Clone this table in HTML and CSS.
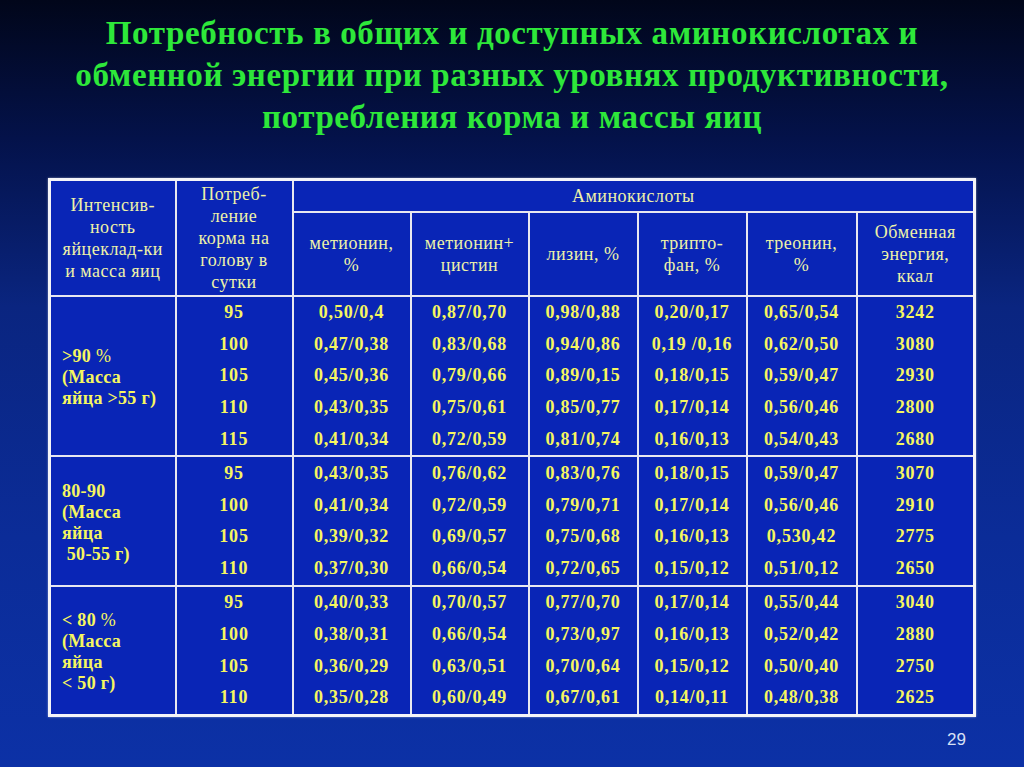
FILE: index.html
```html
<!DOCTYPE html>
<html lang="ru">
<head>
<meta charset="utf-8">
<title>Потребность в аминокислотах</title>
<link rel="stylesheet" href="styles.css">
</head>
<body>
<div class="slide">
  <h1 class="title">Потребность в общих и доступных аминокислотах и<br>обменной энергии при разных уровнях продуктивности,<br>потребления корма и массы яиц</h1>
  <div class="table-wrap">
    <table class="data">
      <colgroup>
        <col class="c1"><col class="c2"><col class="c3"><col class="c4"><col class="c5"><col class="c6"><col class="c7"><col class="c8">
      </colgroup>
      <thead>
        <tr class="h1row">
          <th rowspan="2">Интенсив-<br>ность<br>яйцеклад-ки<br>и масса яиц</th>
          <th rowspan="2">Потреб-<br>ление<br>корма на<br>голову в<br>сутки</th>
          <th colspan="6">Аминокислоты</th>
        </tr>
        <tr class="h2row">
          <th>метионин,<br>%</th>
          <th>метионин+<br>цистин</th>
          <th>лизин, %</th>
          <th>трипто-<br>фан, %</th>
          <th>треонин,<br>%</th>
          <th>Обменная<br>энергия,<br>ккал</th>
        </tr>
      </thead>
      <tbody>
        <tr><td class="label" rowspan="5">&gt;90 <span class="n">%</span><br>(Масса<br>яйца &gt;55 г)</td><td>95</td><td>0,50/0,4</td><td>0,87/0,70</td><td>0,98/0,88</td><td>0,20/0,17</td><td>0,65/0,54</td><td>3242</td></tr>
        <tr><td>100</td><td>0,47/0,38</td><td>0,83/0,68</td><td>0,94/0,86</td><td>0,19 /0,16</td><td>0,62/0,50</td><td>3080</td></tr>
        <tr><td>105</td><td>0,45/0,36</td><td>0,79/0,66</td><td>0,89/0,15</td><td>0,18/0,15</td><td>0,59/0,47</td><td>2930</td></tr>
        <tr><td>110</td><td>0,43/0,35</td><td>0,75/0,61</td><td>0,85/0,77</td><td>0,17/0,14</td><td>0,56/0,46</td><td>2800</td></tr>
        <tr><td>115</td><td>0,41/0,34</td><td>0,72/0,59</td><td>0,81/0,74</td><td>0,16/0,13</td><td>0,54/0,43</td><td>2680</td></tr>
      </tbody>
      <tbody>
        <tr><td class="label" rowspan="4">80-90<br>(Масса<br>яйца<br>&nbsp;50-55 г)</td><td>95</td><td>0,43/0,35</td><td>0,76/0,62</td><td>0,83/0,76</td><td>0,18/0,15</td><td>0,59/0,47</td><td>3070</td></tr>
        <tr><td>100</td><td>0,41/0,34</td><td>0,72/0,59</td><td>0,79/0,71</td><td>0,17/0,14</td><td>0,56/0,46</td><td>2910</td></tr>
        <tr><td>105</td><td>0,39/0,32</td><td>0,69/0,57</td><td>0,75/0,68</td><td>0,16/0,13</td><td>0,530,42</td><td>2775</td></tr>
        <tr><td>110</td><td>0,37/0,30</td><td>0,66/0,54</td><td>0,72/0,65</td><td>0,15/0,12</td><td>0,51/0,12</td><td>2650</td></tr>
      </tbody>
      <tbody>
        <tr><td class="label" rowspan="4">&lt; 80 <span class="n">%</span><br>(Масса<br>яйца<br>&lt; 50 г)</td><td>95</td><td>0,40/0,33</td><td>0,70/0,57</td><td>0,77/0,70</td><td>0,17/0,14</td><td>0,55/0,44</td><td>3040</td></tr>
        <tr><td>100</td><td>0,38/0,31</td><td>0,66/0,54</td><td>0,73/0,97</td><td>0,16/0,13</td><td>0,52/0,42</td><td>2880</td></tr>
        <tr><td>105</td><td>0,36/0,29</td><td>0,63/0,51</td><td>0,70/0,64</td><td>0,15/0,12</td><td>0,50/0,40</td><td>2750</td></tr>
        <tr><td>110</td><td>0,35/0,28</td><td>0,60/0,49</td><td>0,67/0,61</td><td>0,14/0,11</td><td>0,48/0,38</td><td>2625</td></tr>
      </tbody>
    </table>
  </div>
  <div class="page-num">29</div>
</div>
</body>
</html>
```

FILE: styles.css
```css
html, body {
  margin: 0;
  padding: 0;
}

body {
  width: 1024px;
  height: 767px;
  overflow: hidden;
  background: linear-gradient(180deg, #01061a 0%, #04124a 18%, #0a2580 40%, #0b2c98 70%, #0c31a6 100%);
  font-family: "Liberation Serif", "Times New Roman", serif;
}

.slide {
  display: flex;
  flex-direction: column;
  height: 767px;
}

.title {
  margin: 0;
  padding-top: 12px;
  text-align: center;
  color: #2ee83a;
  font-family: "Liberation Serif", serif;
  font-weight: bold;
  font-size: 33px;
  letter-spacing: 0.6px;
  line-height: 42px;
  height: 126px;
}

.table-wrap {
  margin-top: 40px;
  padding-left: 48px;
}

.data {
  border-collapse: collapse;
  table-layout: fixed;
  width: 925px;
  background: #0925b6;
  border: 3px solid #f4f4f8;
  box-shadow: 0 0 2px rgba(255,255,255,0.5);
}

.c1 { width: 126px; }
.c2 { width: 117px; }
.c3 { width: 118px; }
.c4 { width: 118px; }
.c5 { width: 109px; }
.c6 { width: 109px; }
.c7 { width: 110px; }
.c8 { width: 118px; }

.data th {
  border: 2px solid #e8e8f0;
  color: #eef2a8;
  font-weight: normal;
  font-size: 18px;
  letter-spacing: 0.5px;
  line-height: 22px;
  padding: 0 1px;
  text-align: center;
  vertical-align: middle;
}

.h1row { height: 32px; }
.h2row { height: 84px; }

.data tbody {
  border-top: 2px solid #e8e8f0;
}

.data td {
  border-left: 2px solid #e8e8f0;
  border-right: 2px solid #e8e8f0;
  color: #f6f660;
  font-weight: bold;
  font-size: 18px;
  height: 31.8px;
  padding: 0;
  text-align: center;
  vertical-align: middle;
  letter-spacing: 0.8px;
}

.data td.label {
  text-align: left;
  padding-left: 11px;
  padding-top: 4px;
  line-height: 21px;
  letter-spacing: 0.3px;
}

.n {
  font-weight: normal;
}

.page-num {
  align-self: flex-end;
  margin-top: 13px;
  margin-right: 58px;
  color: #d8e0f4;
  font-family: "Liberation Sans", Arial, sans-serif;
  font-size: 17px;
}
```
